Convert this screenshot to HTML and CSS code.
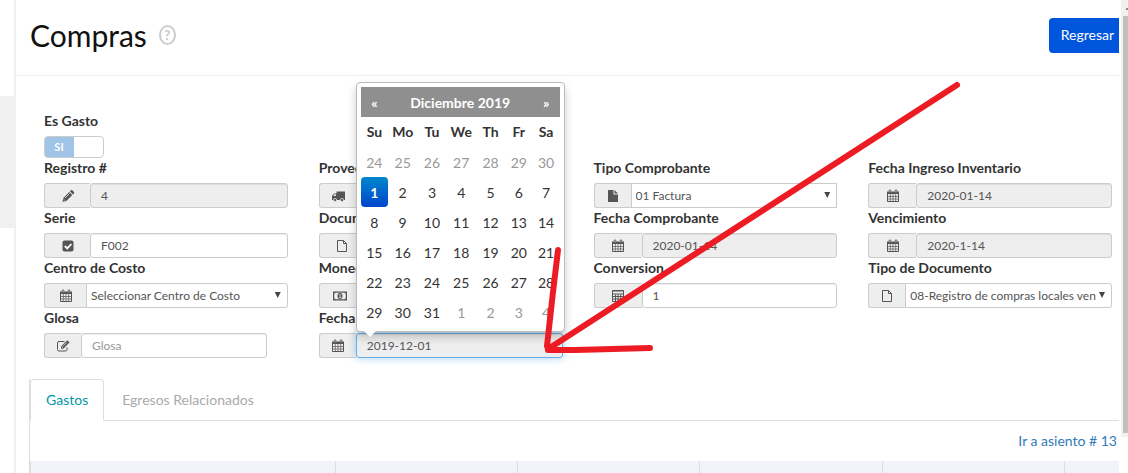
FILE: index.html
```html
<!DOCTYPE html>
<html lang="es">
<head>
  <meta charset="UTF-8">
  <meta name="viewport" content="width=device-width, initial-scale=1.0">
  <title>Compras</title>
  <link rel="stylesheet" href="styles.css">
</head>
<body>
  <!-- Iconos -->
  <svg class="sprite" aria-hidden="true">
    <symbol id="i-calendar" viewBox="0 0 14 14">
      <path fill="none" stroke="currentColor" d="M1.5 3.5h11v9h-11z"/>
      <path fill="none" stroke="currentColor" stroke-width=".7" d="M1 7.500h12M1 10h12M4.300 5v8M7 5v8M9.700 5v8"/>
      <path fill="currentColor" d="M1 2.500h12V5H1z"/>
      <path fill="#eee" stroke="currentColor" stroke-width=".8" d="M3.200 1h1.600v2.600H3.200zM9.200 1h1.600v2.600H9.200z"/>
    </symbol>
    <symbol id="i-pencil" viewBox="0 0 14 14">
      <path fill="currentColor" d="M1.500 12.800l.8-3.900 5.900-5.900 3.100 3.100-5.900 5.900zM8.900 2.300l1-1q.7-.5 1.400 0l1.700 1.700q.5.700 0 1.400l-1 1z"/>
      <path stroke="#eee" stroke-width=".8" fill="none" d="M4 9l4.500-4.500M2.800 10.300l1.200 1.200"/>
    </symbol>
    <symbol id="i-check" viewBox="0 0 14 14">
      <rect x="1.500" y="1.500" width="11" height="11" rx="2" fill="currentColor"/>
      <path fill="none" stroke="#fff" stroke-width="1.800" d="M3.800 7l2.400 2.400 4.200-4.400"/>
    </symbol>
    <symbol id="i-edit" viewBox="0 0 14 14">
      <path fill="none" stroke="currentColor" d="M8.500 2.500H3Q1.500 2.500 1.500 4v6.500Q1.500 12 3 12h6.500q1.500 0 1.500-1.500V8.500"/>
      <path fill="currentColor" d="M5 9.800V7.500l5.800-5.800q.6-.5 1.200 0l1 1q.5.600 0 1.200L7.300 9.800z"/>
      <path fill="none" stroke="#eee" stroke-width=".7" d="M6.700 7.600l4-4M5.700 7.800l1.300 1.300"/>
    </symbol>
    <symbol id="i-truck" viewBox="0 0 14 14">
      <path fill="currentColor" d="M5.500 2.500H14V11H1V6.800L3.200 4.500h2.300z"/>
      <path fill="#eee" d="M2 7l1.600-1.700h1.300V7z"/>
      <circle cx="4" cy="11" r="1.600" fill="currentColor" stroke="#eee" stroke-width=".7"/>
      <circle cx="11" cy="11" r="1.600" fill="currentColor" stroke="#eee" stroke-width=".7"/>
    </symbol>
    <symbol id="i-file-o" viewBox="0 0 14 14">
      <path fill="none" stroke="currentColor" d="M2.500 1.500h6l3 3v8h-9zM8.500 1.500v3h3"/>
    </symbol>
    <symbol id="i-file" viewBox="0 0 14 14">
      <path fill="currentColor" d="M2 1h5.500v4.500H12V13H2zM8.500 1L12 4.500H8.500z"/>
    </symbol>
    <symbol id="i-money" viewBox="0 0 14 14">
      <path fill="none" stroke="currentColor" stroke-width="1.200" d="M.6 3.100h12.800v7.800H.6z"/>
      <path fill="currentColor" d="M1 3h2L1 5zM13 3h-2l2 2zM1 11h2L1 9zM13 11h-2l2-2z"/>
      <ellipse cx="7" cy="7" rx="2.500" ry="2.900" fill="currentColor"/>
      <path fill="none" stroke="#eee" stroke-width=".8" d="M6.300 6l.9-.6v3M6.200 8.500h2"/>
    </symbol>
    <symbol id="i-calculator" viewBox="0 0 14 14">
      <path fill="none" stroke="currentColor" d="M1.500 1.500h11v11h-11zM1.500 7.500h11M1.500 10h11M4.500 5.500v7M7 5.500v7M9.700 5.500v7"/>
      <path fill="none" stroke="currentColor" d="M2 2h10M2 5h10"/>
    </symbol>
  </svg>

  <div class="page">
    <div class="sidebar"><div class="sidebar-active"></div></div>

    <main class="main">
      <header class="header">
        <h1>Compras</h1>
        <a class="help" href="#" aria-label="Ayuda">?</a>
        <button class="btn-back" type="button">Regresar</button>
      </header>

      <form class="form">
        <div class="field field-full">
          <label for="gasto">Es Gasto</label>
          <div class="switch">
            <input type="checkbox" id="gasto" checked>
            <span>SI</span>
          </div>
        </div>

        <div class="field">
          <label for="registro">Registro #</label>
          <div class="group">
            <span class="addon"><svg><use href="#i-pencil"/></svg></span>
            <input type="text" id="registro" value="4" readonly>
          </div>
        </div>
        <div class="field">
          <label for="proveedor">Proveedor</label>
          <div class="group">
            <span class="addon addon-sm"><svg><use href="#i-truck"/></svg></span>
            <input type="text" id="proveedor">
          </div>
        </div>
        <div class="field">
          <label for="tipo">Tipo Comprobante</label>
          <div class="group">
            <span class="addon addon-sm"><svg><use href="#i-file"/></svg></span>
            <div class="select square"><select id="tipo"><option>01 Factura</option></select></div>
          </div>
        </div>
        <div class="field">
          <label for="ingreso">Fecha Ingreso Inventario</label>
          <div class="group">
            <span class="addon addon-lg"><svg><use href="#i-calendar"/></svg></span>
            <input type="text" id="ingreso" value="2020-01-14" readonly>
          </div>
        </div>

        <div class="field">
          <label for="serie">Serie</label>
          <div class="group">
            <span class="addon"><svg><use href="#i-check"/></svg></span>
            <input type="text" id="serie" value="F002">
          </div>
        </div>
        <div class="field">
          <label for="documento">Documento</label>
          <div class="group">
            <span class="addon"><svg><use href="#i-file-o"/></svg></span>
            <input type="text" id="documento">
          </div>
        </div>
        <div class="field">
          <label for="fecha-comp">Fecha Comprobante</label>
          <div class="group">
            <span class="addon addon-lg"><svg><use href="#i-calendar"/></svg></span>
            <input type="text" id="fecha-comp" value="2020-01-14" readonly>
          </div>
        </div>
        <div class="field">
          <label for="vencimiento">Vencimiento</label>
          <div class="group">
            <span class="addon addon-lg"><svg><use href="#i-calendar"/></svg></span>
            <input type="text" id="vencimiento" value="2020-1-14" readonly>
          </div>
        </div>

        <div class="field">
          <label for="centro">Centro de Costo</label>
          <div class="group">
            <span class="addon addon-md"><svg><use href="#i-calendar"/></svg></span>
            <div class="select"><select id="centro"><option>Seleccionar Centro de Costo</option></select></div>
          </div>
        </div>
        <div class="field">
          <label for="moneda">Moneda</label>
          <div class="group">
            <span class="addon addon-md"><svg><use href="#i-money"/></svg></span>
            <div class="select"><select id="moneda"><option></option></select></div>
          </div>
        </div>
        <div class="field">
          <label for="conversion">Conversion</label>
          <div class="group">
            <span class="addon addon-lg"><svg><use href="#i-calculator"/></svg></span>
            <input type="text" id="conversion" value="1">
          </div>
        </div>
        <div class="field">
          <label for="tipo-doc">Tipo de Documento</label>
          <div class="group">
            <span class="addon addon-sm"><svg><use href="#i-file-o"/></svg></span>
            <div class="select"><select id="tipo-doc"><option>08-Registro de compras locales ven</option></select></div>
          </div>
        </div>

        <div class="field">
          <label for="glosa">Glosa</label>
          <div class="group group-short">
            <span class="addon addon-sm"><svg><use href="#i-edit"/></svg></span>
            <input type="text" id="glosa" placeholder="Glosa">
          </div>
        </div>
        <div class="field">
          <label for="fecha">Fecha</label>
          <div class="group">
            <span class="addon addon-sm"><svg><use href="#i-calendar"/></svg></span>
            <div class="date">
              <input class="active" type="text" id="fecha" value="2019-12-01" readonly>
              <div class="datepicker">
                <table>
                  <thead>
                    <tr class="month">
                      <th><button type="button">«</button></th>
                      <th colspan="5"><button type="button">Diciembre 2019</button></th>
                      <th><button type="button">»</button></th>
                    </tr>
                    <tr class="days"><th>Su</th><th>Mo</th><th>Tu</th><th>We</th><th>Th</th><th>Fr</th><th>Sa</th></tr>
                  </thead>
                  <tbody>
                    <tr>
                      <td class="old"><button type="button">24</button></td>
                      <td class="old"><button type="button">25</button></td>
                      <td class="old"><button type="button">26</button></td>
                      <td class="old"><button type="button">27</button></td>
                      <td class="old"><button type="button">28</button></td>
                      <td class="old"><button type="button">29</button></td>
                      <td class="old"><button type="button">30</button></td>
                    </tr>
                    <tr>
                      <td class="today"><button type="button">1</button></td>
                      <td><button type="button">2</button></td>
                      <td><button type="button">3</button></td>
                      <td><button type="button">4</button></td>
                      <td><button type="button">5</button></td>
                      <td><button type="button">6</button></td>
                      <td><button type="button">7</button></td>
                    </tr>
                    <tr>
                      <td><button type="button">8</button></td>
                      <td><button type="button">9</button></td>
                      <td><button type="button">10</button></td>
                      <td><button type="button">11</button></td>
                      <td><button type="button">12</button></td>
                      <td><button type="button">13</button></td>
                      <td><button type="button">14</button></td>
                    </tr>
                    <tr>
                      <td><button type="button">15</button></td>
                      <td><button type="button">16</button></td>
                      <td><button type="button">17</button></td>
                      <td><button type="button">18</button></td>
                      <td><button type="button">19</button></td>
                      <td><button type="button">20</button></td>
                      <td><button type="button">21</button></td>
                    </tr>
                    <tr>
                      <td><button type="button">22</button></td>
                      <td><button type="button">23</button></td>
                      <td><button type="button">24</button></td>
                      <td><button type="button">25</button></td>
                      <td><button type="button">26</button></td>
                      <td><button type="button">27</button></td>
                      <td><button type="button">28</button></td>
                    </tr>
                    <tr>
                      <td><button type="button">29</button></td>
                      <td><button type="button">30</button></td>
                      <td><button type="button">31</button></td>
                      <td class="old"><button type="button">1</button></td>
                      <td class="old"><button type="button">2</button></td>
                      <td class="old"><button type="button">3</button></td>
                      <td class="old"><button type="button">4</button></td>
                    </tr>
                  </tbody>
                </table>
              </div>
            </div>
          </div>
        </div>
      </form>

      <section class="detail">
        <nav class="tabs">
          <a class="active" href="#gastos">Gastos</a>
          <a href="#egresos">Egresos Relacionados</a>
        </nav>
        <div class="detail-link"><a href="#">Ir a asiento # 13</a></div>
        <table class="grid">
          <tr><th class="wide"></th><th></th><th></th><th></th><th></th><th class="narrow"></th></tr>
        </table>
      </section>
    </main>

    <div class="scroll"><div class="scroll-arrow"></div><div class="scroll-thumb"></div></div>

    <svg class="arrow" aria-hidden="true">
      <path d="M957 85L548 349M558 250L553 292L547 346M548 350L575 350L650 348"/>
    </svg>
  </div>
</body>
</html>
```
FILE: styles.css
```css
* {
  box-sizing: border-box;
}

body {
  margin: 0;
  font-family: Lato, "Open Sans", sans-serif;
  font-size: 14px;
  line-height: 20px;
  color: #333;
  background: #fff;
}

input, select, button {
  font-family: inherit;
}

a {
  color: #337ab7;
  text-decoration: none;
}

.sprite {
  display: none;
}

.page {
  position: relative;
  display: flex;
  min-height: 100vh;
  overflow: hidden;
}

/* barra lateral */
.sidebar {
  width: 16px;
  border-right: 2px solid #f4f0f1;
  padding-top: 96px;
}

.sidebar-active {
  width: 16px;
  height: 132px;
  background: #f0f0f0;
}

.main {
  flex: 1;
  min-width: 0;
}

.header {
  display: flex;
  align-items: center;
  height: 76px;
  padding: 0 0 5px 14px;
  border-bottom: 1px solid #ececf4;
}

.header h1 {
  margin: 0;
  font-size: 30px;
  line-height: 40px;
  font-weight: 400;
  color: #111;
}

.help {
  width: 17px;
  height: 20px;
  margin-left: 12px;
  border: 2px solid #ccc;
  border-radius: 50%;
  font-size: 13px;
  line-height: 16px;
  font-weight: 900;
  text-align: center;
  color: #ccc;
}

.btn-back {
  height: 35px;
  margin-left: auto;
  padding: 0 5px 2px 12px;
  border: 0;
  border-radius: 4px 0 0 4px;
  background: #0055dd;
  color: #fff;
  font-size: 14px;
}

/* formulario */
.form {
  display: grid;
  grid-template-columns: repeat(4, 1fr);
  column-gap: 31px;
  padding: 35px 7px 21px 28px;
}

.field-full {
  grid-column: 1 / -1;
}

.field label {
  display: block;
  margin-bottom: 5px;
  font-weight: 700;
}

.group {
  display: flex;
  height: 25px;
}

.group-short {
  margin-right: 21px;
}

.addon {
  display: flex;
  align-items: center;
  justify-content: center;
  width: 46px;
  border: 1px solid #ccc;
  border-right: 0;
  border-radius: 3px 0 0 3px;
  background: #eee;
  color: #555;
}

.addon-lg {
  width: 48px;
}

.addon-md {
  width: 42px;
}

.addon-sm {
  width: 37px;
}

.addon svg {
  width: 14px;
  height: 14px;
}

.group input {
  flex: 1;
  min-width: 0;
  width: 100%;
  height: 25px;
  padding: 0 10px;
  border: 1px solid #ccc;
  border-radius: 3px;
  background: #fff;
  color: #555;
  font-size: 12px;
  box-shadow: inset 0 1px 1px rgba(0, 0, 0, 0.075);
}

.group input[readonly] {
  background: #eee;
}

.group input::placeholder {
  color: #999;
}

.group input.active {
  border-color: #66afe9;
  box-shadow: inset 0 1px 1px rgba(0, 0, 0, 0.075), 0 0 8px rgba(102, 175, 233, 0.6);
}

.select {
  position: relative;
  flex: 1;
  min-width: 0;
}

.select select {
  appearance: none;
  width: 100%;
  height: 25px;
  padding: 0 14px 0 4px;
  border: 1px solid #ccc;
  border-radius: 0 3px 3px 0;
  background: #fff;
  color: #555;
  font-size: 12px;
}

.select.square select {
  border-radius: 0;
}

.select::after {
  content: "";
  position: absolute;
  top: 9px;
  right: 7px;
  width: 6px;
  height: 6px;
  background: #444;
  clip-path: polygon(0 0, 100% 0, 50% 100%);
}

.switch {
  position: relative;
  width: 60px;
  height: 22px;
}

.switch input {
  appearance: none;
  display: block;
  width: 60px;
  height: 22px;
  margin: 0;
  border: 1px solid #ccc;
  border-radius: 4px;
  background: linear-gradient(to right, #a0c4e6 50%, #fff 50%);
}

.switch span {
  position: absolute;
  top: 1px;
  left: 0;
  width: 30px;
  font-size: 11px;
  font-weight: 700;
  text-align: center;
  color: #fff;
  pointer-events: none;
}

/* calendario */
.date {
  position: relative;
  flex: 1;
}

.datepicker {
  position: absolute;
  z-index: 2;
  left: 0;
  bottom: 26px;
  padding: 4px;
  border: 1px solid #bbb;
  border-radius: 4px;
  background: #fff;
  box-shadow: 0 5px 10px rgba(0, 0, 0, 0.2);
}

.datepicker::after {
  content: "";
  position: absolute;
  top: 100%;
  left: 7px;
  border: 6px solid transparent;
  border-top-color: #fff;
  border-bottom: 0;
}

.datepicker table {
  width: 199px;
  border-collapse: collapse;
}

.datepicker th,
.datepicker td {
  height: 30px;
  padding: 0;
  text-align: center;
}

.datepicker .days th {
  width: 29px;
}

.datepicker .days th:first-child,
.datepicker .days th:nth-child(6),
.datepicker .days th:last-child {
  width: 27px;
}

.datepicker button {
  display: block;
  width: 100%;
  height: 30px;
  padding: 0;
  border: 0;
  border-radius: 4px;
  background: none;
  color: #333;
  font-size: 14px;
}

.datepicker .month {
  background: #8f8f8f;
}

.datepicker .month button {
  color: #fff;
  font-weight: 700;
}

.datepicker .old button {
  color: #999;
}

.datepicker .today button {
  background: linear-gradient(#0088cc, #0044cc);
  color: #fff;
  font-weight: 700;
}

/* pestañas y tabla */
.detail {
  margin-left: 13px;
  border-left: 1px solid #ddd;
}

.tabs {
  display: flex;
  border-bottom: 1px solid #ddd;
}

.tabs a {
  margin: 0 2px -1px 0;
  padding: 10px 15px;
  border: 1px solid transparent;
  color: #aaa;
}

.tabs a.active {
  border-color: #ddd;
  border-bottom-color: #fff;
  border-radius: 4px 4px 0 0;
  background: #fff;
  color: #0097a7;
}

.detail-link {
  padding: 10px 2px;
  text-align: right;
}

.grid {
  width: 100%;
  table-layout: fixed;
  border-collapse: collapse;
}

.grid th {
  height: 12px;
  padding: 0;
  border-left: 1px solid #ddd;
  background: #f2f2f9;
}

.grid .wide {
  width: 28%;
}

.grid .narrow {
  width: 5%;
}

.scroll {
  display: flex;
  flex-direction: column;
  width: 7px;
  height: 437px;
  margin-left: 2px;
  padding: 8px 0 4px 2px;
  background: #f1f1f1;
}

.scroll-arrow {
  height: 8px;
  background: linear-gradient(to right, transparent 60%, #888 60%) 0 0 / 100% 2px no-repeat;
}

.scroll-thumb {
  flex: 1;
  background: #c1c1c1;
}

/* flecha roja */
.arrow {
  position: absolute;
  z-index: 3;
  top: 0;
  left: 0;
  width: 100%;
  height: 100%;
  fill: none;
  stroke: #ed1c24;
  stroke-width: 6;
  stroke-linecap: round;
  stroke-linejoin: round;
  pointer-events: none;
}
```
